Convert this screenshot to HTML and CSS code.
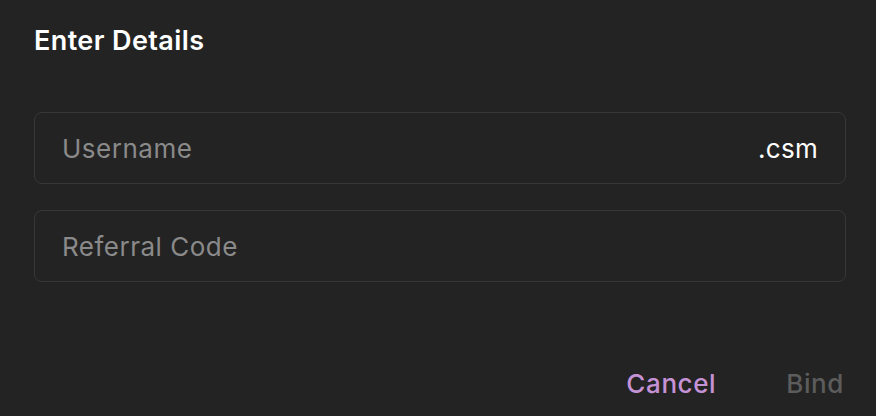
FILE: index.html
```html
<!DOCTYPE html>
<html>
<head>
<meta charset="utf-8">
<link rel="stylesheet" href="styles.css">
</head>
<body>
<div class="dialog">
  <h1 class="title">Enter Details</h1>
  <div class="fields">
    <div class="field">
      <span class="placeholder">Username</span>
      <span class="suffix">.csm</span>
    </div>
    <div class="field">
      <span class="placeholder">Referral Code</span>
    </div>
  </div>
  <div class="actions">
    <span class="btn cancel">Cancel</span>
    <span class="btn bind">Bind</span>
  </div>
</div>
</body>
</html>
```
FILE: styles.css
```css
html, body {
  margin: 0;
  padding: 0;
  background: #232323;
  width: 876px;
  height: 416px;
  overflow: hidden;
  font-family: Inter, "Noto Sans", sans-serif;
}
.dialog {
  padding: 24px 30px 0 34px;
}
.title {
  margin: 0;
  font-size: 27px;
  font-weight: 600;
  letter-spacing: 0.4px;
  color: #ffffff;
  line-height: 34px;
}
.fields {
  margin-top: 54px;
  display: flex;
  flex-direction: column;
  gap: 26px;
}
.field {
  height: 70px;
  border: 1px solid #373737;
  border-radius: 8px;
  display: flex;
  align-items: center;
  justify-content: space-between;
  padding: 0 27px 0 27px;
  font-size: 26px;
  letter-spacing: 0.5px;
}
.placeholder { color: #8a8a8a; }
.suffix { color: #ffffff; letter-spacing: 0.3px; }
.actions {
  margin-top: 86px;
  display: flex;
  justify-content: flex-end;
  gap: 70px;
  padding-right: 2px;
}
.btn {
  font-size: 26px;
  font-weight: 500;
  letter-spacing: 0.6px;
}
.cancel { color: #c692d6; }
.bind { color: #5c5c5c; }
```
